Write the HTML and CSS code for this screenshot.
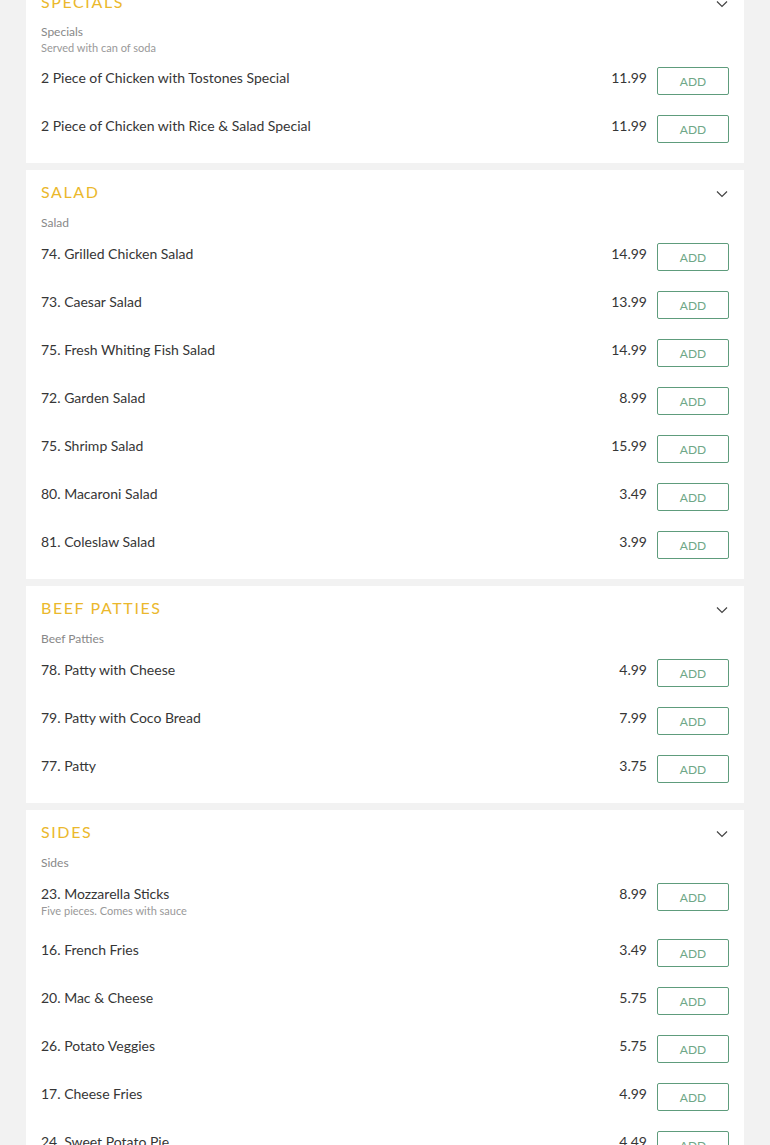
FILE: index.html
```html
<!DOCTYPE html>
<html>
<head>
<meta charset="utf-8">
<link rel="stylesheet" href="styles.css">
</head>
<body>
<div class="menu">
  <section class="card card-first">
    <div class="cat-head"><h2 class="cat-title">SPECIALS</h2><svg class="chev" width="12" height="8" viewBox="0 0 12 8"><polyline points="1,1.5 6,6.5 11,1.5" fill="none" stroke="#444" stroke-width="1.2"/></svg></div>
    <div class="cat-sub">Specials</div>
    <div class="cat-desc">Served with can of soda</div>
    <div class="items">
      <div class="row"><div class="info"><div class="name">2 Piece of Chicken with Tostones Special</div></div><div class="price">11.99</div><button class="add">ADD</button></div>
      <div class="row"><div class="info"><div class="name">2 Piece of Chicken with Rice &amp; Salad Special</div></div><div class="price">11.99</div><button class="add">ADD</button></div>
    </div>
  </section>

  <section class="card">
    <div class="cat-head"><h2 class="cat-title">SALAD</h2><svg class="chev" width="12" height="8" viewBox="0 0 12 8"><polyline points="1,1.5 6,6.5 11,1.5" fill="none" stroke="#444" stroke-width="1.2"/></svg></div>
    <div class="cat-sub">Salad</div>
    <div class="items">
      <div class="row"><div class="info"><div class="name">74. Grilled Chicken Salad</div></div><div class="price">14.99</div><button class="add">ADD</button></div>
      <div class="row"><div class="info"><div class="name">73. Caesar Salad</div></div><div class="price">13.99</div><button class="add">ADD</button></div>
      <div class="row"><div class="info"><div class="name">75. Fresh Whiting Fish Salad</div></div><div class="price">14.99</div><button class="add">ADD</button></div>
      <div class="row"><div class="info"><div class="name">72. Garden Salad</div></div><div class="price">8.99</div><button class="add">ADD</button></div>
      <div class="row"><div class="info"><div class="name">75. Shrimp Salad</div></div><div class="price">15.99</div><button class="add">ADD</button></div>
      <div class="row"><div class="info"><div class="name">80. Macaroni Salad</div></div><div class="price">3.49</div><button class="add">ADD</button></div>
      <div class="row"><div class="info"><div class="name">81. Coleslaw Salad</div></div><div class="price">3.99</div><button class="add">ADD</button></div>
    </div>
  </section>

  <section class="card">
    <div class="cat-head"><h2 class="cat-title">BEEF PATTIES</h2><svg class="chev" width="12" height="8" viewBox="0 0 12 8"><polyline points="1,1.5 6,6.5 11,1.5" fill="none" stroke="#444" stroke-width="1.2"/></svg></div>
    <div class="cat-sub">Beef Patties</div>
    <div class="items">
      <div class="row"><div class="info"><div class="name">78. Patty with Cheese</div></div><div class="price">4.99</div><button class="add">ADD</button></div>
      <div class="row"><div class="info"><div class="name">79. Patty with Coco Bread</div></div><div class="price">7.99</div><button class="add">ADD</button></div>
      <div class="row"><div class="info"><div class="name">77. Patty</div></div><div class="price">3.75</div><button class="add">ADD</button></div>
    </div>
  </section>

  <section class="card">
    <div class="cat-head"><h2 class="cat-title">SIDES</h2><svg class="chev" width="12" height="8" viewBox="0 0 12 8"><polyline points="1,1.5 6,6.5 11,1.5" fill="none" stroke="#444" stroke-width="1.2"/></svg></div>
    <div class="cat-sub">Sides</div>
    <div class="items">
      <div class="row"><div class="info"><div class="name">23. Mozzarella Sticks</div><div class="desc">Five pieces. Comes with sauce</div></div><div class="price">8.99</div><button class="add">ADD</button></div>
      <div class="row"><div class="info"><div class="name">16. French Fries</div></div><div class="price">3.49</div><button class="add">ADD</button></div>
      <div class="row"><div class="info"><div class="name">20. Mac &amp; Cheese</div></div><div class="price">5.75</div><button class="add">ADD</button></div>
      <div class="row"><div class="info"><div class="name">26. Potato Veggies</div></div><div class="price">5.75</div><button class="add">ADD</button></div>
      <div class="row"><div class="info"><div class="name">17. Cheese Fries</div></div><div class="price">4.99</div><button class="add">ADD</button></div>
      <div class="row"><div class="info"><div class="name">24. Sweet Potato Pie</div></div><div class="price">4.49</div><button class="add">ADD</button></div>
    </div>
  </section>
</div>
</body>
</html>
```

FILE: styles.css
```css
html, body {
  margin: 0;
  padding: 0;
  background: #f2f2f2;
  font-family: Lato, "Open Sans", sans-serif;
  color: #333;
}

.menu {
  width: 718px;
  margin-left: 26px;
  display: flex;
  flex-direction: column;
  gap: 7px;
}

.card {
  background: #fff;
  padding: 12px 15px 0 15px;
}

.card-first {
  margin-top: -20px;
}

.cat-head {
  display: flex;
  align-items: center;
  justify-content: space-between;
  height: 20px;
}

.cat-title {
  margin: 0;
  font-size: 16px;
  line-height: 20px;
  font-weight: 400;
  letter-spacing: 1.6px;
  color: #ebb82c;
}

.chev {
  margin-right: 1px;
  margin-top: 4px;
}

.cat-sub {
  margin-top: 13px;
  font-size: 12px;
  line-height: 16px;
  color: #888;
}

.card-first .cat-sub {
  margin-top: 12px;
}

.cat-desc {
  font-size: 11px;
  line-height: 15px;
  color: #999;
}

.items {
  margin-top: 12px;
}

.row {
  display: flex;
  align-items: flex-start;
  padding-bottom: 20px;
}

.info {
  flex: 1;
  padding-top: 1px;
}

.name {
  font-size: 14px;
  line-height: 20px;
  color: #363636;
}

.desc {
  font-size: 11px;
  line-height: 14px;
  padding-bottom: 1px;
  color: #999;
}

.price {
  font-size: 14px;
  line-height: 20px;
  padding-top: 1px;
  color: #363636;
  margin-right: 10px;
}

.add {
  width: 72px;
  height: 28px;
  box-sizing: border-box;
  border: 1px solid #5e9c7c;
  border-radius: 2px;
  background: #fff;
  color: #6fa887;
  font-family: Lato, "Open Sans", sans-serif;
  font-size: 12px;
  padding: 0;
  margin: 0;
}
```
